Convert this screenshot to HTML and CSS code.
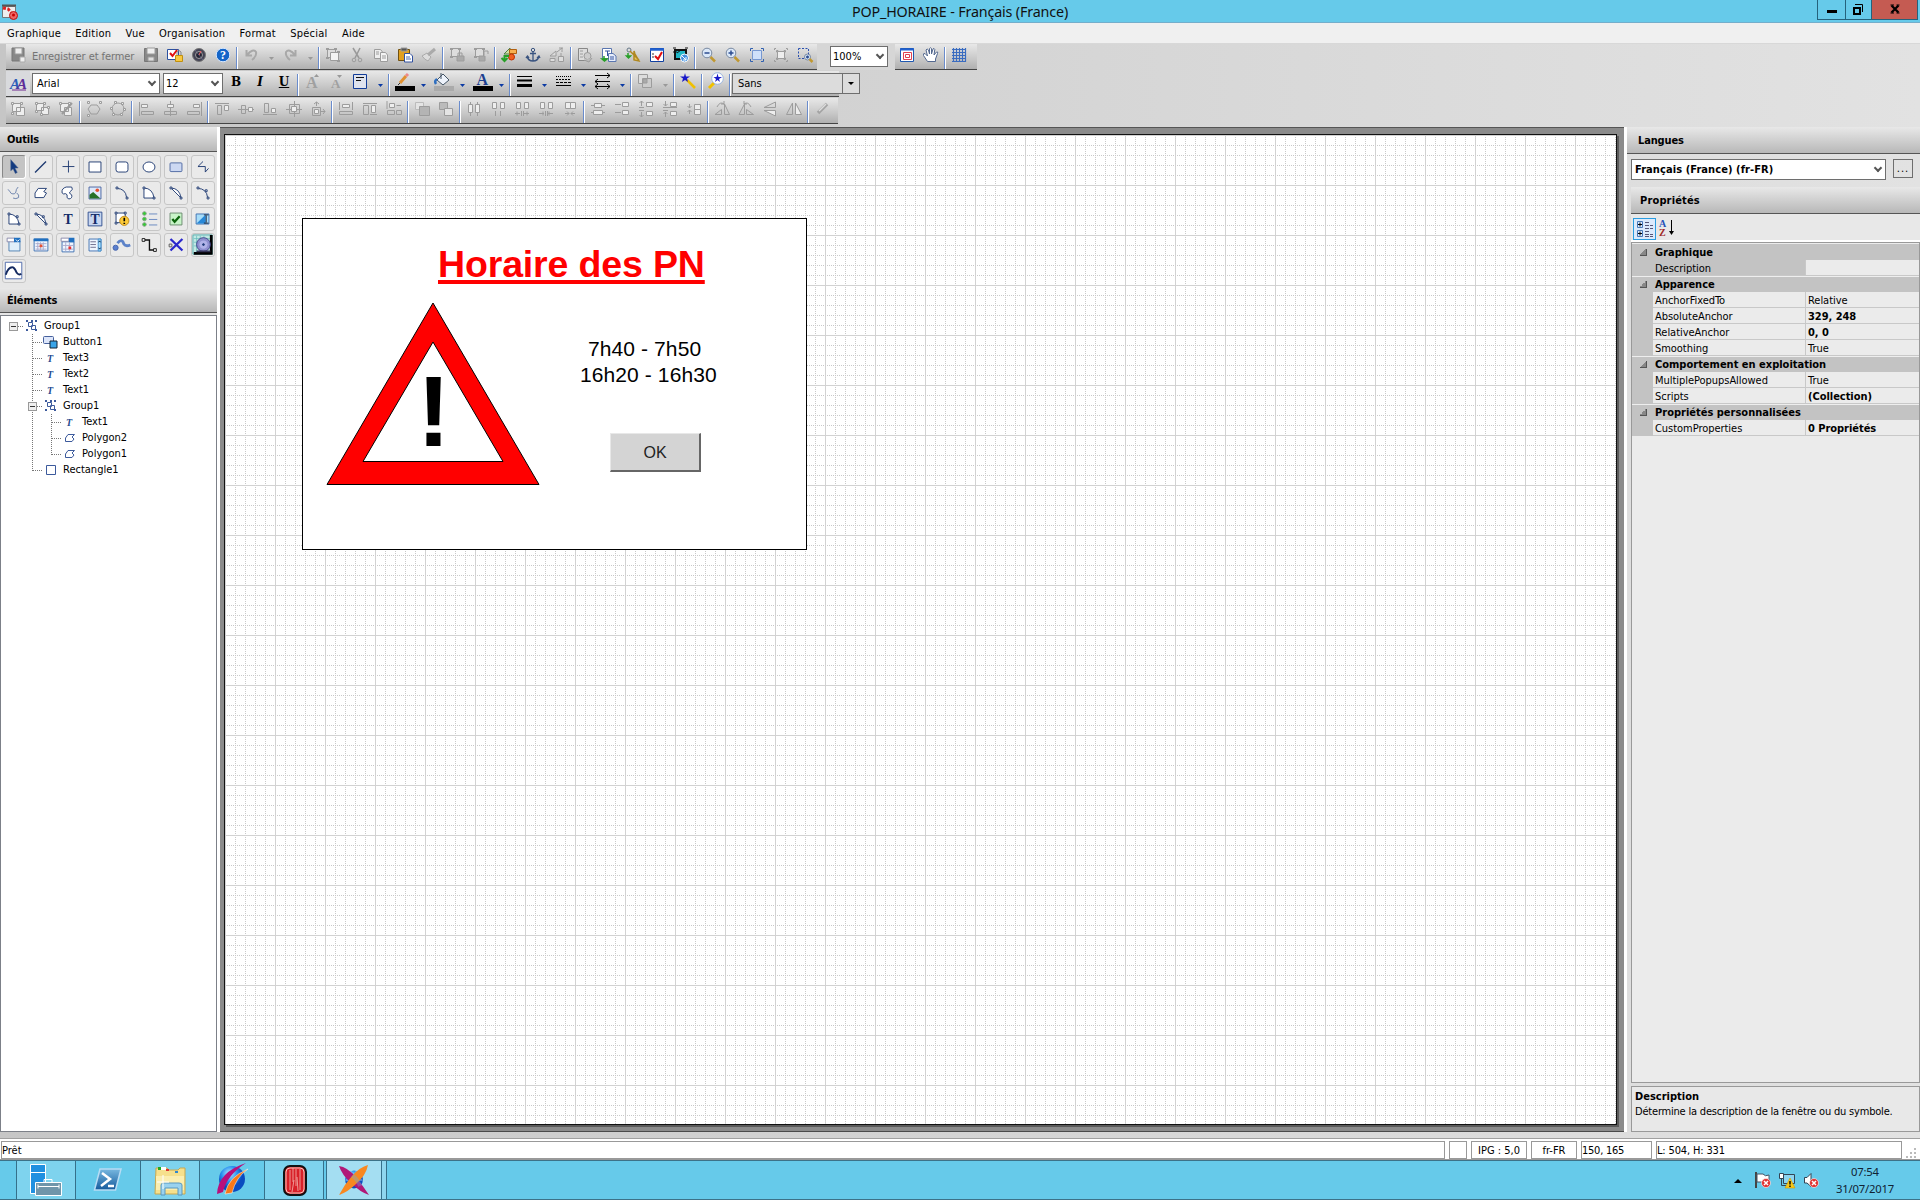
FILE: index.html
```html
<!DOCTYPE html>
<html lang="fr">
<head>
<meta charset="utf-8">
<title>POP_HORAIRE - Français (France)</title>
<link rel="stylesheet" href="styles.css">
</head>
<body>
<div class="window">
<header class="titlebar">
  <svg class="appicon" viewBox="0 0 18 16"><path d="M1.500 2.500H14.500V13.500H1.500Z" fill="#eee" stroke="#777"/><path d="M1 1.500H15" stroke="#555" stroke-width="2"/><path d="M2 4L7 5L10 8" stroke="#d22" stroke-width="3" stroke-dasharray="3 1.500" fill="none"/><circle cx="12.500" cy="11.500" r="4" fill="#e66" stroke="#b11"/><circle cx="12.500" cy="11" r="1.500" fill="#c00"/></svg>
  <h1>POP_HORAIRE - Français (France)</h1>
  <div class="winbtns">
    <span class="wb min"><svg viewBox="0 0 27 19"><path d="M9 11.500H19" stroke="#000" stroke-width="3"/></svg></span>
    <span class="wb max"><svg viewBox="0 0 25 19"><path d="M8 8H14V14H8Z" fill="none" stroke="#000" stroke-width="2"/><path d="M9 4.500H16.500V12" fill="none" stroke="#000"/></svg></span>
    <span class="wb close"><svg viewBox="0 0 45 19"><path d="M19.500 5.500L26.500 12.500M26.500 5.500L19.500 12.500" stroke="#000" stroke-width="2.200"/><path d="M18.500 5H22M24.500 5H27.500M18.500 13H22M24.500 13H27.500" stroke="#000"/></svg></span>
  </div>
</header>
<nav class="menu"><span>Graphique</span><span>Edition</span><span>Vue</span><span>Organisation</span><span>Format</span><span>Spécial</span><span>Aide</span></nav>

<div class="toolbars">
<div class="tb tb1">
  <svg class="i" viewBox="0 0 24 24"><path d="M6 5H18V18H6Z" fill="#888" stroke="#777"/><path d="M9 5H16V11H9Z" fill="#eee"/><path d="M14 14H19V19H14Z" fill="#eee" stroke="#aaa"/></svg>
  <span class="savelabel">Enregistrer et fermer</span>
  <svg class="i" viewBox="0 0 24 24"><path d="M5.500 5.500H18.500V18.500H5.500Z" fill="#888" stroke="#777"/><path d="M8 5H16V11H8Z" fill="#eee"/><path d="M9 14H15V18H9Z" fill="#ddd"/></svg>
  <svg class="i" viewBox="0 0 24 24"><path d="M4.500 6.500H15.500V16.500H4.500Z" fill="#fff" stroke="#2a50a0"/><path d="M7 10L9.500 13L14 7" stroke="#e01010" stroke-width="2"/><path d="M12.500 12.500H19.500V18.500H12.500Z" fill="#f8c840" stroke="#c09010"/><path d="M14 12V9Q16 6 18 9V12" stroke="#888"/></svg>
  <svg class="i" viewBox="0 0 24 24"><circle cx="12" cy="12" r="6.500" fill="#445" stroke="#777"/><circle cx="12" cy="12" r="3.500" fill="#223"/><path d="M12 12L14 8" stroke="#f66"/><path d="M8 7L16 17" stroke="#88a" opacity=".5"/></svg>
  <svg class="i" viewBox="0 0 24 24"><circle cx="12" cy="12" r="6.800" fill="#1565c8" stroke="#d8e8ff"/><text x="12" y="16" class="q">?</text></svg>
  <i class="sep"></i>
  <svg class="i sp" viewBox="0 0 39 24"><path d="M7.500 7V12.500H13M8 12Q14 5 17 9Q18 13 13 17" stroke="#a8a8a8" stroke-width="2"/><path d="M30 14H35L32.500 17Z" fill="#999" stroke="none"/></svg>
  <svg class="i sp" viewBox="0 0 39 24"><path d="M17.500 7V12.500H12M17 12Q11 5 8 9Q7 13 12 17" stroke="#a8a8a8" stroke-width="2"/><path d="M30 14H35L32.500 17Z" fill="#999" stroke="none"/></svg>
  <i class="sep"></i>
  <svg class="i" viewBox="0 0 24 24"><path d="M6.500 6.500H14.500V14.500H6.500Z" fill="#ddd"/><path d="M9.500 9.500H17.500V17.500H9.500Z" fill="#f4f4f4"/><path d="M5 6H8M13 6H16M5 15H8M16 18H19M16 9H19" stroke-width="2"/></svg>
  <svg class="i" viewBox="0 0 24 24"><path d="M8 5L14 15M15 5L10 15" stroke="#999" stroke-width="1.500"/><circle cx="9" cy="17" r="1.800"/><circle cx="15" cy="17" r="1.800"/></svg>
  <svg class="i" viewBox="0 0 24 24"><path d="M5.500 6.500H11.500L13.500 9V15.500H5.500Z" fill="#eee"/><path d="M11.500 9.500H16.500L18.500 12V18.500H11.500Z" fill="#f4f4f4"/><path d="M7 9H10M7 11H10M13 13H17M13 15H17"/></svg>
  <svg class="i" viewBox="0 0 24 24"><path d="M5.500 6.500H16.500V17.500H5.500Z" fill="#e0a020" stroke="#705010"/><path d="M8 5H14V8H8Z" fill="#555"/><path d="M11.500 10.500H17L19.500 13V19H11.500Z" fill="#fff" stroke="#3050a0"/><path d="M13 14H17M13 16H18" stroke="#5070b0"/></svg>
  <svg class="i" viewBox="0 0 24 24"><path d="M5 13L10 10L14 14L11 18Q8 17 5 13Z" fill="#ddd" stroke="#aaa"/><path d="M11 12L18 6" stroke="#aaa" stroke-width="3"/></svg>
  <i class="sep"></i>
  <svg class="i" viewBox="0 0 24 24"><path d="M6.500 5.500H14.500V13.500H6.500Z" fill="#ddd"/><path d="M5 6H8M13 6H16M5 14H8" stroke-width="2"/><path d="M12 13H19V18H12Z" fill="#aaa"/><path d="M13 13V10H17V13"/></svg>
  <svg class="i" viewBox="0 0 24 24"><path d="M6.500 5.500H14.500V13.500H6.500Z" fill="#ddd"/><path d="M5 6H8M13 6H16M5 14H8" stroke-width="2"/><path d="M10 13H16V18H10Z" fill="#aaa"/><path d="M15 12V8H19V11"/></svg>
  <i class="sep"></i>
  <svg class="i" viewBox="0 0 24 24"><path d="M7 11L13 5V11Z" fill="#d0e0a0" stroke="#50804a"/><path d="M12.500 6.500H19.500V10.500H12.500Z" fill="#f8b050" stroke="#b06010"/><circle cx="14.500" cy="14" r="3" fill="#f06020" stroke="#c03000"/><path d="M12 13H7.500V17M4.500 15L7.500 18L10.500 15" stroke="#28a028" stroke-width="2"/></svg>
  <svg class="i" viewBox="0 0 24 24"><circle cx="12" cy="7" r="1.700" stroke="#3a5480"/><path d="M12 9V18M9 10.500H15M6 13Q7 18 12 18Q17 18 18 13M5 15L6.500 13L8 15M16 15L18 13L19 15" stroke="#3a5480" stroke-width="1.300"/></svg>
  <svg class="i" viewBox="0 0 24 24"><path d="M5 13L11 8V13ZM5 15.500H10V18.500H5ZM13.500 13.500H18.500V18.500H13.500Z" fill="#ddd"/><path d="M12 9L17 5M17 5V9M14 5H18M16 10V13"/></svg>
  <i class="sep"></i>
  <svg class="i" viewBox="0 0 24 24"><path d="M5.500 5.500H14.500V17.500H5.500Z" fill="#ddd" stroke="#888"/><path d="M7 8H10M7 11H10M7 14H10"/><circle cx="14.500" cy="13" r="3.500" fill="#ccc"/><path d="M11 17L16 19L19 15" fill="#bbb"/></svg>
  <svg class="i" viewBox="0 0 24 24"><path d="M5.500 5.500H14.500V15.500H5.500Z" fill="#fff" stroke="#5a76b0"/><path d="M8 8H13M10.500 8V13" stroke="#3454a0"/><path d="M11.500 10.500H16L19 13V18.500H11.500Z" fill="#e8eefc" stroke="#5a76b0"/><path d="M13 14H17M13 16H17" stroke="#3454a0"/><path d="M7 13V17M5 16L7.500 18L10 16Z" fill="#2a2" stroke="#28a028" stroke-width="1.500"/></svg>
  <svg class="i" viewBox="0 0 24 24"><circle cx="8" cy="7" r="2" stroke="#678"/><path d="M9 8L18 17M13 8V17L18 18L14 11Z" fill="#e8c860" stroke="#b08820" stroke-width="1.500"/><path d="M7 10V14M5.500 13L7.500 15L9.500 13Z" fill="#2a2" stroke="#28a028" stroke-width="1.500"/></svg>
  <svg class="i" viewBox="0 0 24 24"><path d="M5.500 5.500H18.500V18.500H5.500Z" fill="#fff" stroke="#1040a0"/><path d="M5 6.500H19" stroke="#2060d0" stroke-width="2.500"/><path d="M7 11H9M7 14H9" stroke="#333"/><path d="M10 13L13 16L17 9" stroke="#e01010" stroke-width="2"/></svg>
  <svg class="i" viewBox="0 0 24 24"><path d="M6 7H17V16H6Z" fill="#20b8c8" stroke="#111" stroke-width="2"/><path d="M4 5H7M16 5H19M4 9H8M8 10L12 7" stroke="#111"/><circle cx="15.500" cy="15" r="4" fill="#4090e0" stroke="#fff"/><path d="M13 13L17 17M17 14V17H14" stroke="#fff"/></svg>
  <i class="sep"></i>
  <svg class="i mag" viewBox="0 0 24 24"><circle cx="10" cy="10" r="4.800"/><path d="M7.500 10H12.500" class="k"/><path d="M13.500 14L18 18.500" class="h"/></svg>
  <svg class="i mag" viewBox="0 0 24 24"><circle cx="10" cy="10" r="4.800"/><path d="M7.500 10H12.500M10 7.500V12.500" class="k"/><path d="M13.500 14L18 18.500" class="h"/></svg>
  <svg class="i" viewBox="0 0 24 24"><path d="M7.500 7.500H16.500V16.500H7.500Z" fill="#cfe0fa" stroke="#7898d0"/><path d="M5.500 8V5.500H8M16 5.500H18.500V8M18.500 16V18.500H16M8 18.500H5.500V16" stroke="#3060b0"/></svg>
  <svg class="i" viewBox="0 0 24 24"><path d="M8.500 8.500H15.500V15.500H8.500Z" fill="#eee"/><path d="M7.500 7.500H9V9H7.500ZM15 7.500H16.500V9H15ZM7.500 15H9V16.500H7.500ZM15 15H16.500V16.500H15ZM5.500 7V5.500H7M17 5.500H18.500V7M5.500 17V18.500H7M18.500 17V18.500H17" /></svg>
  <svg class="i mag" viewBox="0 0 24 24"><path d="M5.500 5.500H15.500V15.500H5.500Z" stroke="#2a50b0" stroke-dasharray="2 1.500"/><circle cx="14.500" cy="14" r="3"/><path d="M13 14H16M14.500 12.500V15.500" class="k"/><path d="M16.500 16L19.500 19" class="h"/></svg>
  <span class="zoomwrap"><span class="combo zoom">100%<b class="chev"></b></span></span>
  <svg class="i" viewBox="0 0 24 24"><path d="M5.500 5.500H18.500V18.500H5.500Z" fill="#fff" stroke="#1f58b0"/><path d="M5 6.500H19" stroke="#2060d0" stroke-width="2"/><path d="M8.500 9.500H16.500V16.500H8.500Z" stroke="#e04050"/><path d="M10.500 11.500H14.500V14.500H10.500Z" stroke="#e04050"/></svg>
  <svg class="i" viewBox="0 0 24 24"><path d="M8.500 18.500L4.500 12.500Q4 10 6 10.500L8.500 13L7 7Q8 5 9.500 7L10.500 11V5.500Q11.500 4 12.500 5.500V11L14 6Q15 4.500 15.800 6.500L15 12L17.500 9Q19.500 8.500 18.500 10.500L16.500 16V18.500Z" fill="#fff" stroke="#53688f"/></svg>
  <i class="sep"></i>
  <svg class="i" viewBox="0 0 24 24"><path d="M6.500 5V19M9.500 5V19M12.500 5V19M15.500 5V19M18.500 5V19M5 6.500H19M5 9.500H19M5 12.500H19M5 15.500H19M5 18.500H19" stroke="#3a6cc0" stroke-width="1.200"/></svg>
</div>

<div class="tb tb2">
  <svg class="i aa" viewBox="0 0 24 24"><text x="4" y="17" class="a1" textLength="17">A<tspan class="a2">A</tspan></text><path d="M6 18.500H20" stroke="#702890"/></svg>
  <span class="combo font">Arial<b class="chev"></b></span>
  <span class="combo size">12<b class="chev"></b></span>
  <span class="fmt">B</span><span class="fmt it">I</span><span class="fmt un">U</span>
  <i class="sep"></i>
  <svg class="i" viewBox="0 0 24 24"><text x="6" y="18" class="ga">A</text><path d="M14 7L16.500 4L19 7Z" fill="#999" stroke="none"/></svg>
  <svg class="i" viewBox="0 0 24 24"><text x="7" y="18" class="gb">A</text><path d="M13 5H18L15.500 8Z" fill="#999" stroke="none"/></svg>
  <svg class="i sp" viewBox="0 0 39 24"><path d="M5.500 4.500H18.500V18.500H5.500Z" stroke="#123c98" fill="#dfe3ee"/><path d="M8 7.500H16M8 10.500H13" stroke="#111"/><path class="c" d="M30 14H35L32.500 17Z"/></svg>
  <i class="sep"></i>
  <svg class="i sp" viewBox="0 0 39 24"><path d="M9 13L15 6" stroke="#e09030" stroke-width="3"/><path d="M15 6L17 4" stroke="#e88" stroke-width="3"/><path d="M7 15L9 13" stroke="#333"/><path d="M4 16H24V21H4Z" fill="#000" stroke="none"/><path class="c" d="M30 14H35L32.500 17Z"/></svg>
  <svg class="i sp" viewBox="0 0 39 24"><path d="M7 10L13 4L19 10L13 15Z" fill="#eef3fb" stroke="#456"/><path d="M11 9V3" stroke="#456"/><path d="M7 9Q4 11 6 14" stroke="#2f6fc0" stroke-width="2.500"/><path d="M4 16H24V21H4Z" fill="#aaa" stroke="none"/><path class="c" d="M30 14H35L32.500 17Z"/></svg>
  <svg class="i sp" viewBox="0 0 39 24"><text x="7.500" y="15" class="na">A</text><path d="M4 16H24V21H4Z" fill="#000" stroke="none"/><path class="c" d="M30 14H35L32.500 17Z"/></svg>
  <i class="sep"></i>
  <svg class="i sp" viewBox="0 0 39 24"><path d="M5 6.500H20" stroke="#000" stroke-width="1"/><path d="M5 10.500H20" stroke="#000" stroke-width="2"/><path d="M5 15.500H20" stroke="#000" stroke-width="3"/><path class="c" d="M30 14H35L32.500 17Z"/></svg>
  <svg class="i sp" viewBox="0 0 39 24"><path d="M5 6.500H20" stroke="#000" stroke-dasharray="1 1"/><path d="M5 9.500H20" stroke="#000" stroke-dasharray="2 1"/><path d="M5 12.500H20" stroke="#000" stroke-dasharray="3 1"/><path d="M5 15.500H20" stroke="#000"/><path class="c" d="M30 14H35L32.500 17Z"/></svg>
  <svg class="i sp" viewBox="0 0 39 24"><path d="M5 5.500H20M17 3L20 5.500L17 8M5 11.500H20M8 9L5 11.500L8 14M5 16.500H20M17 14L20 16.500L17 19M8 14L5 16.500L8 19" stroke="#000"/><path class="c" d="M30 14H35L32.500 17Z"/></svg>
  <i class="sep"></i>
  <svg class="i sp" viewBox="0 0 39 24"><path d="M5.500 4.500H14.500V13.500H5.500Z" fill="#ddd"/><path d="M9.500 8.500H18.500V17.500H9.500Z" fill="#ccc"/><path d="M10 9H14V13H10Z" fill="#aaa"/><path d="M30 14H35L32.500 17Z" fill="#999" stroke="none"/></svg>
  <i class="sep"></i>
  <svg class="i" viewBox="0 0 24 24"><path d="M11 10L19 18" stroke="#f0c000" stroke-width="2.500"/><path class="star" d="M9 3L10 6.500H14L11 8.500L12 12L9 10L6 12L7 8.500L4 6.500H8Z"/></svg>
  <i class="sep"></i>
  <svg class="i" viewBox="0 0 24 24"><path d="M10 13L5 18" stroke="#f0c000" stroke-width="3"/><circle cx="13.500" cy="8.500" r="5.800" fill="#fff" stroke="#9ab6e0"/><path class="star" d="M13.500 3.500L14.500 7H18L15 9L16 12L13.500 10L11 12L12 9L9.500 7H12.500Z"/></svg>
  <i class="sep"></i>
  <span class="combo sans">Sans<b class="drop"></b></span>
</div>

<div class="tb tb3">
  <svg class="i w" viewBox="0 0 24 24"><path d="M6.500 6.500H14.500V14.500H6.500ZM10.500 10.500H18.500V18.500H10.500Z"/><path d="M5.500 5.500h2v2h-2zM14.500 5.500h2v2h-2zM5.500 15.500h2v2h-2z"/></svg>
  <svg class="i w" viewBox="0 0 24 24"><path d="M6.500 6.500H13.500V13.500H6.500ZM11.500 10.500H18.500V17.500H11.500Z"/><path d="M5.500 5.500h2v2h-2zM13.500 5.500h2v2h-2zM5.500 13.500h2v2h-2zM17.500 9.500h2v2h-2zM10.500 16.500h2v2h-2z"/></svg>
  <svg class="i w" viewBox="0 0 24 24"><path d="M6.500 6.500H14.500V14.500H6.500ZM10.500 10.500H17.500V18.500H10.500Z"/><path d="M5.500 5.500h2v2h-2zM14.500 5.500h2v2h-2z"/><path d="M8 17L18 6" stroke-width="2"/></svg>
  <i class="sep"></i>
  <svg class="i" viewBox="0 0 24 24"><path d="M9 8L15 8L18 12L15 17H9L6 12Z"/><path class="wf" d="M5.500 4.500h2v2h-2zM17.500 4.500h2v2h-2zM5.500 17.500h2v2h-2z"/></svg>
  <svg class="i" viewBox="0 0 24 24"><circle cx="12" cy="12" r="6"/><path class="wf" d="M8.500 4.500h2v2h-2zM15.500 5.500h2v2h-2zM4.500 10.500h2v2h-2zM17.500 11.500h2v2h-2zM6.500 16.500h2v2h-2zM14.500 16.500h2v2h-2z"/></svg>
  <i class="sep"></i>
  <svg class="i" viewBox="0 0 24 24"><path d="M5.500 5V19M7.500 14.500H19.500V17.500H7.500Z"/><path class="wf" d="M7.500 7.500H13.500V10.500H7.500Z"/></svg>
  <svg class="i" viewBox="0 0 24 24"><path d="M12.500 4V19M6.500 14.500H18.500V17.500H6.500Z"/><path class="wf" d="M9.500 7.500H15.500V10.500H9.500Z"/></svg>
  <svg class="i" viewBox="0 0 24 24"><path d="M19.500 5V19M5.500 14.500H17.500V17.500H5.500Z"/><path class="wf" d="M11.500 7.500H17.500V10.500H11.500Z"/></svg>
  <i class="sep"></i>
  <svg class="i" viewBox="0 0 24 24"><path d="M5 6.500H19M7.500 8.500H11.500V17.500H7.500Z"/><path class="wf" d="M14.500 8.500H18.500V13.500H14.500Z"/></svg>
  <svg class="i" viewBox="0 0 24 24"><path d="M4 12.500H20M7.500 8.500H11.500V16.500H7.500Z"/><path class="wf" d="M14.500 10.500H18.500V14.500H14.500Z"/></svg>
  <svg class="i" viewBox="0 0 24 24"><path d="M5 17.500H19M6.500 6.500H10.500V15.500H6.500Z"/><path class="wf" d="M13.500 11.500H17.500V15.500H13.500Z"/></svg>
  <svg class="i" viewBox="0 0 24 24"><path d="M12.500 4V20M4 12.500H20M7.500 7.500H17.500V16.500H7.500Z"/><path class="wf" d="M9.500 9.500H14.500V14.500H9.500Z"/></svg>
  <svg class="i" viewBox="0 0 24 24"><path d="M6.500 10.500H14.500V18.500H6.500ZM10.500 9V5M8 7L10.500 5L13 7M14 14.500H19M17 12L19 14.500L17 17"/><path class="wf" d="M8.500 12.500H12.500V16.500H8.500Z"/></svg>
  <i class="sep"></i>
  <svg class="i" viewBox="0 0 24 24"><path d="M5.500 5V13M18.500 5V13M5.500 14.500H18.500V17.500H5.500Z"/><path class="wf" d="M8.500 7.500H15.500V10.500H8.500Z"/></svg>
  <svg class="i" viewBox="0 0 24 24"><path d="M5.500 8.500H10.500V17.500H5.500ZM5 6.500H19M12 17.500H19"/><path class="wf" d="M13.500 8.500H17.500V15.500H13.500Z"/></svg>
  <svg class="i" viewBox="0 0 24 24"><path d="M5 4V12M5.500 13.500H12.500V17.500H5.500ZM14.500 8.500H19M14.500 13.500H19.500V17.500H14.500Z"/><path class="wf" d="M7.500 6.500H12.500V10.500H7.500Z"/></svg>
  <i class="sep"></i>
  <svg class="i" viewBox="0 0 24 24"><path d="M5.500 5.500H13.500V12.500H5.500Z" fill="#e4e4e4" stroke="#bbb"/><path d="M9.500 9.500H19.500V18.500H9.500Z" fill="#b4b4b4"/></svg>
  <svg class="i" viewBox="0 0 24 24"><path d="M5.500 5.500H13.500V12.500H5.500Z" fill="#bbb"/><path d="M10.500 11.500H18.500V18.500H10.500Z" fill="#e4e4e4"/></svg>
  <i class="sep"></i>
  <svg class="i" viewBox="0 0 24 24"><path d="M8.500 5V19M15.500 5V19"/><path class="wf" d="M6.500 7.500H10.500V15.500H6.500ZM13.500 7.500H17.500V15.500H13.500Z"/></svg>
  <svg class="i" viewBox="0 0 24 24"><path d="M9.500 14V19M14.500 14V19"/><path class="wf" d="M6.500 5.500H10.500V11.500H6.500ZM14.500 5.500H18.500V11.500H14.500Z"/></svg>
  <svg class="i" viewBox="0 0 24 24"><path d="M5 16.500H10M14 16.500H19M7 14.500V18.500M17 14.500V18.500M11.500 14V19M13.500 14V19"/><path class="wf" d="M6.500 5.500H10.500V11.500H6.500ZM14.500 5.500H18.500V11.500H14.500Z"/></svg>
  <svg class="i" viewBox="0 0 24 24"><path d="M5 16.500H10M14 16.500H19M9 14.500V18.500M15 14.500V18.500M11.500 14V19M13.500 14V19"/><path class="wf" d="M6.500 5.500H10.500V11.500H6.500ZM14.500 5.500H18.500V11.500H14.500Z"/></svg>
  <svg class="i" viewBox="0 0 24 24"><path d="M7 16.500H11M13 16.500H17M9 14.500L11 16.500L9 18.500M15 14.500L13 16.500L15 18.500"/><path class="wf" d="M7.500 5.500H12.500V11.500H7.500ZM12.500 5.500H17.500V11.500H12.500Z"/></svg>
  <i class="sep"></i>
  <svg class="i" viewBox="0 0 24 24"><path d="M5 8.500H19M5 15.500H19"/><path class="wf" d="M8.500 6.500H15.500V10.500H8.500ZM7.500 13.500H16.500V17.500H7.500Z"/></svg>
  <svg class="i" viewBox="0 0 24 24"><path d="M5 7.500H11M5 15.500H11"/><path class="wf" d="M12.500 5.500H18.500V9.500H12.500ZM12.500 13.500H18.500V17.500H12.500Z"/></svg>
  <svg class="i" viewBox="0 0 24 24"><path d="M7.500 4V9M5.500 6L7.500 4L9.500 6M5 10.500H10M5 13.500H10M7.500 15V20M5.500 18L7.500 20L9.500 18"/><path class="wf" d="M12.500 5.500H18.500V9.500H12.500ZM12.500 14.500H18.500V18.500H12.500Z"/></svg>
  <svg class="i" viewBox="0 0 24 24"><path d="M7.500 4V9M5.500 7L7.500 9L9.500 7M5 10.500H19M5 13.500H10M7.500 15V20M5.500 17L7.500 15L9.500 17"/><path class="wf" d="M12.500 5.500H18.500V9.500H12.500ZM12.500 14.500H18.500V18.500H12.500Z"/></svg>
  <svg class="i" viewBox="0 0 24 24"><path d="M7.500 7V11M5.500 9L7.500 11L9.500 9M7.500 13V17M5.500 15L7.500 13L9.500 15"/><path class="wf" d="M12.500 7.500H18.500V12.500H12.500ZM12.500 12.500H18.500V17.500H12.500Z"/></svg>
  <i class="sep"></i>
  <svg class="i" viewBox="0 0 24 24"><path d="M5 17.500H11.500L11.500 12.500ZM14.500 17.500H19.500L14.500 7ZM7 10Q10 4 14 7M14 4V7H11"/></svg>
  <svg class="i" viewBox="0 0 24 24"><path d="M5 17.500H10.500V7ZM12.500 17.500H19.500L12.500 12.500ZM17 10Q14 4 10 7M10 4V7H13"/></svg>
  <svg class="i" viewBox="0 0 24 24"><path d="M6 10.500H17.500V5Z"/><path class="wf" d="M6 13.500H17.500V19Z"/></svg>
  <svg class="i" viewBox="0 0 24 24"><path d="M4.500 17.500H10.500V6Z"/><path class="wf" d="M13.500 17.500H19.500L13.500 6Z"/></svg>
  <i class="sep"></i>
  <svg class="i" viewBox="0 0 24 24"><path d="M8 16L17 7" stroke="#a4a4a4" stroke-width="3.500"/><path d="M9 14L16 7" stroke="#ddd" stroke-width="1.500"/></svg>
</div>
</div>

<main class="work">
<aside class="left">
  <h2 class="hd outils">Outils</h2>
  <div class="tools">
    <svg class="on" viewBox="0 0 24 24"><path d="M8.500 4V16L11 14L13.500 19L15.500 18L13 13H16.500Z" fill="#123a80" stroke="#46608c" stroke-width=".6"/></svg>
    <svg viewBox="0 0 24 24"><path d="M5.500 18L17.500 6" stroke-width="1.500"/></svg>
    <svg viewBox="0 0 24 24"><path d="M12.500 5V18M6 11.500H19"/></svg>
    <svg viewBox="0 0 24 24"><path class="f" d="M5.500 6.500H18.500V17.500H5.500Z"/></svg>
    <svg viewBox="0 0 24 24"><rect class="f" x="5.500" y="6.500" width="13" height="11" rx="2.500"/></svg>
    <svg viewBox="0 0 24 24"><ellipse class="f" cx="12" cy="12" rx="6.500" ry="5.500"/></svg>
    <svg viewBox="0 0 24 24"><rect x="5.500" y="7.500" width="13" height="9.500" rx="1" fill="#ccd8f2" stroke="#4a66a0"/></svg>
    <svg viewBox="0 0 24 24"><path d="M12 6L6.500 11.500H14.500V17.500L18 13.500"/></svg>
    <svg viewBox="0 0 24 24"><path stroke="#667da8" d="M5.500 8Q8 11 9 12.500Q13 14 14 11Q14 8 16.500 5.500M15 12Q18 14 17 17Q14 19 11 17.500"/></svg>
    <svg viewBox="0 0 24 24"><path class="f" d="M5.500 17V12L9 7H18L15 10.500L18 12L15 17Z"/></svg>
    <svg viewBox="0 0 24 24"><path class="f" d="M5.500 11Q5 7 10 5.500H16Q18 8 15 10Q12 12 16 14Q17 18 13 18.500Q10 18 11 14Q10 12 7 13Q5 12 5.500 11Z"/></svg>
    <svg viewBox="0 0 24 24"><path fill="#dfe8fa" stroke="#4460a0" d="M5.500 5.500H18.500V18.500H5.500Z"/><circle cx="14.500" cy="9" r="2" fill="#e65030" stroke="none"/><path d="M6 18V14L10 11L18 18Z" fill="#277027" stroke="none"/></svg>
    <svg viewBox="0 0 24 24"><path d="M6 7Q16 7 17 17"/><path class="f s" d="M5.500 5.500h2v2h-2zM16.500 16.500h2v2h-2z"/></svg>
    <svg viewBox="0 0 24 24"><path class="f" d="M6.500 6.500Q16 7 17.500 17.500H6.500Z"/><path class="f s" d="M5.500 5.500h2v2h-2zM16.500 16.500h2v2h-2z"/></svg>
    <svg viewBox="0 0 24 24"><path class="f" d="M6.500 6.500Q16 7 17.500 17.500Z"/><path class="f s" d="M5.500 5.500h2v2h-2zM16.500 16.500h2v2h-2z"/></svg>
    <svg viewBox="0 0 24 24"><path d="M6 7Q16 7 17 17"/><path class="f s" d="M5.500 5.500h2v2h-2zM16.500 16.500h2v2h-2zM14.500 8.500h2v2h-2z"/></svg>
    <svg viewBox="0 0 24 24"><path class="f" d="M6.500 6.500Q16 7 17.500 17.500H6.500Z"/><path class="f s" d="M5.500 5.500h2v2h-2zM16.500 16.500h2v2h-2zM14.500 8.500h2v2h-2z"/></svg>
    <svg viewBox="0 0 24 24"><path class="f" d="M6.500 6.500Q16 7 17.500 17.500Z"/><path class="f s" d="M5.500 5.500h2v2h-2zM16.500 16.500h2v2h-2zM13.500 8.500h2v2h-2z"/></svg>
    <svg viewBox="0 0 24 24"><text class="t" x="12" y="17">T</text></svg>
    <svg viewBox="0 0 24 24"><path d="M4.500 4.500H19.500V19.500H4.500Z" fill="#c8d6f0" stroke="#2d4c8c"/><text class="t" x="12" y="17.500">T</text></svg>
    <svg viewBox="0 0 24 24"><path class="f" d="M5.500 5.500H15.500V16H5.500Z"/><path class="f s" d="M4.500 4.500h2v2h-2zM14.500 4.500h2v2h-2zM4.500 15.500h2v2h-2z"/><circle cx="14.500" cy="14" r="5" fill="#fcca38" stroke="#c08818"/><path d="M14.500 10.500V14.500M14.500 16V17.500" stroke="#000" stroke-width="1.800"/></svg>
    <svg viewBox="0 0 24 24"><g fill="#3c3" stroke="#88a088"><circle cx="7" cy="6" r="2"/><circle cx="7" cy="12" r="2"/><circle cx="7" cy="18" r="2"/></g><path d="M12 6.500H21M12 12.500H21M12 18.500H21" stroke="#6484c0"/></svg>
    <svg viewBox="0 0 24 24"><path d="M5.500 5.500H18.500V18.500H5.500Z" fill="#c8f4c8" stroke="#68886c"/><path d="M8 12L10.500 15L16 9" stroke="#0c640c" stroke-width="2.500"/></svg>
    <svg viewBox="0 0 24 24"><path d="M4.500 6.500H18.500V17.500H4.500Z" fill="#a8ddf8" stroke="#3c70b0"/><path d="M5 17L15 7V17Z" fill="#2888d8" stroke="none"/><path d="M13 7.500H18M13 16.500H18M15.500 8V16" stroke="#223"/></svg>
    <svg viewBox="0 0 24 24"><path d="M6.500 7.500H18.500V18.500H6.500Z" fill="#e0effa" stroke="#5080b0"/><path d="M4.500 4.500H12.500V8.500H4.500Z" fill="#fff" stroke="#88a"/><path d="M12 4H19V9H12Z" fill="#2070c0" stroke="none"/><path d="M14 6L16 8L18 6" stroke="#fff"/></svg>
    <svg viewBox="0 0 24 24"><path d="M4.500 5.500H19.500V18.500H4.500Z" fill="#f0f6ff" stroke="#3c70b0"/><path d="M4 6.500H20" stroke="#2070c0" stroke-width="3"/><path d="M6 10.500H18M6 13.500H18M6 16.500H18M8.500 9V18M11.500 9V18M14.500 9V18" stroke="#aac"/><path d="M10.500 11.500H13.500V14.500H10.500Z" fill="#e85030" stroke="none"/></svg>
    <svg viewBox="0 0 24 24"><path d="M5.500 8.500H18.500V19.500H5.500Z" fill="#f0f6ff" stroke="#3c70b0"/><path d="M4.500 4.500H13V8H4.500Z" fill="#fff" stroke="#88a"/><path d="M13 4H19V9H13Z" fill="#2070c0" stroke="none"/><path d="M6 12.500H18M6 16.500H18M9.500 9V19M13.500 9V19" stroke="#aac"/><path d="M12.500 13.500H15.500V16.500H12.500Z" fill="#e83030" stroke="none"/></svg>
    <svg viewBox="0 0 24 24"><path d="M5.500 5.500H18.500V18.500H5.500Z" fill="#f0f6ff" stroke="#3c70b0"/><path d="M15.500 5.500H18.500V18.500H15.500Z" fill="#a8dcf8" stroke="#4090d0"/><path d="M7 8.500H13M7 11.500H13M7 14.500H13" stroke="#668"/><path d="M16 9L17 7.500L18 9M16 15L17 16.500L18 15" stroke="#124"/></svg>
    <svg viewBox="0 0 24 24"><circle cx="5" cy="15" r="2.800" fill="#5a7fd0" stroke="#4664a8"/><path d="M7 10Q12 4 14 11Q16 14 21 12" stroke="#5c82c8" stroke-width="3"/></svg>
    <svg viewBox="0 0 24 24"><path d="M6 6.500H12.500V17.500H18" stroke="#111" stroke-width="1.500"/><path d="M4.500 5h3v3h-3zM17 16h3v3h-3z" fill="#fff" stroke="#111"/></svg>
    <svg viewBox="0 0 24 24"><path d="M6 5.500L19 18M19 5.500L6 18" stroke="#2a28cc" stroke-width="2.500"/><path d="M4.500 11h3v3h-3z" stroke="#555"/></svg>
    <svg viewBox="0 0 24 24"><path d="M1 1H22V22H1Z" fill="#c2e8e4" stroke="#4aa8a8"/><path d="M2 5H20M2 9H20M2 13H20M5 2V20M9 2V20M13 2V20" stroke="#5bb8b8" stroke-width=".7"/><path d="M21 1V21H2" stroke="#000" stroke-width="3"/><circle cx="12.500" cy="11.500" r="7.500" fill="#8f90d0" stroke="#404488"/><circle cx="12.500" cy="11.500" r="4.500" fill="#b0b2e8" stroke="none"/><circle cx="12.500" cy="11.500" r="1" fill="#23408a"/><path d="M5 19H20" stroke="#335" stroke-width="2"/></svg>
    <svg viewBox="0 0 24 24"><path d="M2.500 2.500H20.500V20.500H2.500Z" fill="#fff" stroke="#4a66a8"/><path d="M3 16Q6 7 11 8Q13 9 15 14Q17 17 20 15" stroke="#142a60" stroke-width="2"/></svg>
  </div>
  <h2 class="hd">Éléments</h2>
  <div class="tree">
    <i class="dots v1"></i><i class="dots v2"></i>
    <div class="row l0"><b class="ex"></b><svg viewBox="0 0 12 12"><path d="M2.500 2.500H6.500V6.500H2.500ZM5.500 5.500H9.500V9.500H5.500Z"/><path class="d" d="M0 0h2v2h-2zM9 0h2v2h-2zM0 9h2v2h-2zM9 9h2v2h-2zM5 0h2v2h-2z"/></svg>Group1</div>
    <div class="row l1"><svg viewBox="0 0 12 12" class="btn"><rect x="-1.500" y=".5" width="10" height="7" rx="1" fill="#dde6fa" stroke="#46609c"/><path d="M5 5H12V12H5Z" fill="#38a4e8" stroke="#123"/></svg>Button1</div>
    <div class="row l1"><svg viewBox="0 0 12 12"><text x="2" y="10" class="tt">T</text></svg>Text3</div>
    <div class="row l1"><svg viewBox="0 0 12 12"><text x="2" y="10" class="tt">T</text></svg>Text2</div>
    <div class="row l1"><svg viewBox="0 0 12 12"><text x="2" y="10" class="tt">T</text></svg>Text1</div>
    <div class="row l1"><b class="ex"></b><svg viewBox="0 0 12 12"><path d="M2.500 2.500H6.500V6.500H2.500ZM5.500 5.500H9.500V9.500H5.500Z"/><path class="d" d="M0 0h2v2h-2zM9 0h2v2h-2zM0 9h2v2h-2zM9 9h2v2h-2zM5 0h2v2h-2z"/></svg>Group1</div>
    <div class="row l2"><svg viewBox="0 0 12 12"><text x="2" y="10" class="tt">T</text></svg>Text1</div>
    <div class="row l2"><svg viewBox="0 0 12 12"><path d="M1.500 9.500V6L4 2.500H10.500L8 5L10 7L8 9.500Z" fill="#fff"/></svg>Polygon2</div>
    <div class="row l2"><svg viewBox="0 0 12 12"><path d="M1.500 9.500V6L4 2.500H10.500L8 5L10 7L8 9.500Z" fill="#fff"/></svg>Polygon1</div>
    <div class="row l1"><svg viewBox="0 0 12 12"><path d="M1.500 1.500H10.500V10.500H1.500Z" fill="#fff"/></svg>Rectangle1</div>
  </div>
</aside>

<section class="frame"><div class="page">
  <svg class="grid" width="1391" height="989">
    <defs><pattern id="g" width="50" height="50" patternUnits="userSpaceOnUse">
      <path d="M10.500 0V50M20.500 0V50M30.500 0V50M40.500 0V50M0 10.500H50M0 20.500H50M0 30.500H50M0 40.500H50" stroke="#c9c9c9" stroke-dasharray="1 1"/>
      <path d="M.5 0V50M0 .5H50" stroke="#d2d2d2"/></pattern></defs>
    <rect width="1391" height="989" fill="url(#g)"/>
  </svg>
  <div class="popup">
    <svg class="sign" viewBox="0 0 214 184"><path d="M107 1L213 182.500H1Z" fill="red" stroke="#000"/><path d="M107 40L177 159.500H37Z" fill="#fff" stroke="#000"/></svg>
    <div class="bang">!</div>
    <div class="ptitle">Horaire des PN</div>
    <div class="t1">7h40 - 7h50</div>
    <div class="t2">16h20 - 16h30</div>
    <div class="ok">OK</div>
  </div>
</div></section>

<aside class="right">
  <h2 class="hd lang">Langues</h2>
  <div class="langrow"><span class="combo lg">Français (France) (fr-FR)<b class="chev"></b></span><span class="more">...</span></div>
  <h2 class="hd props">Propriétés</h2>
  <div class="ptools">
    <svg class="cat" viewBox="0 0 21 20"><path d="M3.500 2.500H8.500V8.500H3.500ZM3.500 11.500H8.500V17.500H3.500Z" fill="#d8eaff" stroke="#4878b8"/><path d="M4 5.500H8M6 3.500V7.500M4 14.500H8M6 12.500V16.500" stroke="#000"/><path d="M11 3.500H15M11 6.500H19M11 9.500H19M11 12.500H15M11 15.500H19M11 17.500H19" stroke="#557" stroke-dasharray="4 1"/></svg>
    <svg class="az" viewBox="0 0 18 20"><text x="1" y="9" fill="#2450b8">A</text><text x="1" y="18" fill="#a02828">Z</text><path d="M13.500 2V16" stroke="#000"/><path d="M11 13H16L13.500 17Z"/></svg>
  </div>
  <div class="pgrid">
    <div class="pc">Graphique</div>
    <div class="pr sel"><span>Description</span><span></span></div>
    <div class="pc">Apparence</div>
    <div class="pr"><span>AnchorFixedTo</span><span>Relative</span></div>
    <div class="pr"><span>AbsoluteAnchor</span><b>329, 248</b></div>
    <div class="pr"><span>RelativeAnchor</span><b>0, 0</b></div>
    <div class="pr"><span>Smoothing</span><span>True</span></div>
    <div class="pc">Comportement en exploitation</div>
    <div class="pr"><span>MultiplePopupsAllowed</span><span>True</span></div>
    <div class="pr"><span>Scripts</span><b>(Collection)</b></div>
    <div class="pc">Propriétés personnalisées</div>
    <div class="pr"><span>CustomProperties</span><b>0 Propriétés</b></div>
  </div>
  <div class="pdesc"><b>Description</b><span>Détermine la description de la fenêtre ou du symbole.</span></div>
</aside>
</main>

<footer class="status"><span class="s1">Prêt</span><span class="s2"></span><span class="s3">IPG : 5,0</span><span class="s4">fr-FR</span><span class="s5">150, 165</span><span class="s6">L: 504, H: 331</span><svg class="grip" viewBox="0 0 12 12"><path d="M8 1h2v2h-2zM4 5h2v2h-2zM8 5h2v2h-2zM0 9h2v2h-2zM4 9h2v2h-2zM8 9h2v2h-2z" fill="#bbb"/></svg></footer>

<div class="taskbar">
  <span class="tk a"><svg viewBox="0 0 36 36"><path d="M2.500 2.500H17.500V31.500H2.500Z" fill="#2090e0" stroke="#fff"/><path d="M2.500 10.500H17.500" stroke="#fff"/><path d="M7.500 20.500H33.500V33.500H7.500Z" fill="#6f95aa" stroke="#fff"/><path d="M16 20V17.500H24V20M10 24.500H31" stroke="#fff" fill="none"/><path d="M10 22.500V26.500M31 22.500V26.500" stroke="#fff"/></svg></span>
  <span class="tk b"><svg viewBox="0 0 36 36"><defs><linearGradient id="ps" x2="0" y2="1"><stop stop-color="#78b8e0"/><stop offset="1" stop-color="#145a9c"/></linearGradient></defs><path d="M10 7H31L25.500 28H4.500Z" fill="url(#ps)" stroke="#b8dcf4" stroke-width="1.500"/><path d="M12 11L20 17L11 24M18 24H24" stroke="#fff" stroke-width="2.500" fill="none"/></svg></span>
  <span class="tk a"><svg viewBox="0 0 36 36"><path d="M4 6H15L17 8H26L28 6H33V32H3Z" fill="#f6e08c" stroke="#c8a850"/><path d="M6 5H14V8H6Z" fill="#fff"/><path d="M6 5H9V8H6Z" fill="#2a2"/><path d="M14 7H17V9H14Z" fill="#d33"/><path d="M23 9H26V11H23Z" fill="#38c"/><path d="M4 14H32V28H4Z" fill="#fbeeb0"/><path d="M9 33V23Q9 21 12 21H27Q30 21 30 23V33H26V26H13V33Z" fill="#9ad2ee" stroke="#5898c0"/><path d="M11 13V27M5 20H17" stroke="#fff"/></svg></span>
  <span class="tk b"><svg viewBox="0 0 36 36"><defs><radialGradient id="ball" cx=".4" cy=".3"><stop stop-color="#b8f0ff"/><stop offset=".6" stop-color="#2890f0"/><stop offset="1" stop-color="#0a4cc0"/></radialGradient></defs><circle cx="18" cy="17" r="13" fill="url(#ball)"/><path d="M3 32Q4 10 32 1Q13 13 9 30Z" fill="#b8107c"/><path d="M11 32Q14 15 34 7Q22 15 18 31Z" fill="#f87818" stroke="#fff" stroke-width=".5"/></svg></span>
  <span class="tk a"><svg viewBox="0 0 36 36"><rect x="8" y="4" width="22" height="29" rx="6" fill="#d82028" stroke="#111" stroke-width="2"/><rect x="10" y="6" width="18" height="25" rx="4" fill="none" stroke="#f6c8c0"/><path d="M14 8V28M17 6V20M20 7V24M24 7V28M18 18L16 30M21 15L22 29" stroke="#f4b8b0" stroke-width=".8"/></svg></span>
  <span class="tk act"><svg viewBox="0 0 36 36"><circle cx="18" cy="17.500" r="9" fill="url(#ball)"/><path d="M10 14H26M9.500 18H26.500M11 22H25M15 9L14 26M20 9L22 26" stroke="#c8e8fc" stroke-width=".7"/><path d="M3 4Q11 5 20 15Q27 24 33 33Q24 30 15 21Q6 13 3 4Z" fill="#b01878"/><path d="M32 3Q24 5 16 14Q8 23 3 33Q12 30 21 21Q30 13 32 3Z" fill="#f88820"/><path d="M16.500 13.500Q22 18 24 24" stroke="#5ab4f4" stroke-width="4" fill="none" opacity=".35"/></svg></span><i class="actend"></i>
  <div class="tray">
    <svg class="up" viewBox="0 0 8 5"><path d="M0 5L4 1L8 5Z"/></svg>
    <svg viewBox="0 0 18 18"><path d="M2 1V17" stroke="#444" stroke-width="2"/><path d="M3 3H9Q11 6 15 4V11H3Z" fill="#fff" stroke="#456"/><circle cx="12" cy="12" r="4.500" fill="#e03030" stroke="#fff" stroke-width=".6"/><path d="M10 10L14 14M14 10L10 14" stroke="#fff" stroke-width="1.500"/></svg>
    <svg viewBox="0 0 18 18"><path d="M5.500 3.500H16.500V12.500H5.500Z" fill="#8cd4f0" stroke="#345"/><path d="M1.500 2.500H5.500V7.500H1.500Z" fill="#fff" stroke="#345"/><path d="M3.500 8V14.500H8" fill="none" stroke="#345"/><path d="M12 7L17 17H7Z" fill="#f8c818" stroke="#d09800" stroke-width=".6"/><path d="M12 10V13.500M12 14.500V16" stroke="#000" stroke-width="1.400"/></svg>
    <svg viewBox="0 0 18 18"><path d="M2.500 6.500H5L9 2.500V15.500L5 12H2.500Z" fill="#fff" stroke="#345"/><circle cx="12" cy="12" r="4.500" fill="#e03030" stroke="#fff" stroke-width=".6"/><path d="M10 10L14 14M14 10L10 14" stroke="#fff" stroke-width="1.500"/></svg>
    <div class="clock"><span>07:54</span><span>31/07/2017</span></div>
  </div>
</div>
</div>
</body>
</html>
```

FILE: styles.css
```css
* { box-sizing: border-box; }
body { margin: 0; font: 11px/16px "DejaVu Sans Condensed", "Noto Sans", sans-serif; color: #000; overflow: hidden; }
svg { display: block; flex: none; }
h1, h2 { margin: 0; font-size: inherit; }
.window { width: 1920px; height: 1200px; display: flex; flex-direction: column; background: linear-gradient(90deg, #c6c6c6, #e2e2e2); }

/* title bar and menu */
.titlebar { height: 23px; flex: none; background: #66caea; border-bottom: 1px solid #74aecb; display: grid; grid-template-columns: 1fr auto 1fr; }
.appicon { width: 18px; height: 16px; margin: 4px 0 0 1px; }
.titlebar h1 { font: 14.3px/23px "Noto Sans", sans-serif; letter-spacing: -0.15px; color: #111; }
.winbtns { justify-self: end; display: flex; height: 20px; margin-right: 2px; border: solid #25627c; border-width: 0 1px 1px; }
.wb { border-left: 1px solid #25627c; }
.wb:first-child { border-left: 0; }
.wb svg { height: 19px; }
.min svg { width: 27px; }
.max svg { width: 25px; }
.close svg { width: 45px; }
.close { background: #c55b52; }
.menu { height: 21px; flex: none; background: #f0f0f0; border-bottom: 1px solid #d8d8d8; display: flex; gap: 14.300px; padding: 3px 7px 0; letter-spacing: 0.250px; }

/* toolbars */
.toolbars { height: 83px; flex: none; display: flex; flex-direction: column; align-items: flex-start; gap: 1px; padding-left: 6px; }
.tb { height: 26px; display: flex; flex: none; background: linear-gradient(#e8e8e8, #c8c8c8 60%, #b0b0b0); border-bottom: 1px solid #444; }
.tb > * { flex: none; }
.tb1 { width: 971px; }
.tb2 { width: 833px; }
.tb3 { width: 832px; }
.i { width: 24px; height: 24px; margin-top: -1px; fill: none; stroke: #9c9c9c; }
.sp { width: 39px; }
.sep { width: 2px; height: 22px; margin: 3px 1px 0; background: linear-gradient(90deg, #6a8ccc 50%, #fff 50%); }
.savelabel { width: 109px; padding: 5px 0 0 2px; color: #747474; white-space: nowrap; letter-spacing: -0.080px; }
.i text { stroke: none; font-family: "Liberation Serif", serif; font-weight: bold; }
.q { fill: #fff; font-size: 12px; text-anchor: middle; }
.a1 { fill: #2c5cb8; font-size: 15px; font-style: italic; }
.a2 { fill: #5c2c98; }
.ga { fill: #a0a0a0; font-size: 16px; }
.gb { fill: #a0a0a0; font-size: 13px; }
.na { fill: #1c3f90; font-size: 16px; }
.c { fill: #0b3aa4; stroke: none; }
.star { fill: #1818c8; stroke: none; }
.mag circle { fill: #dbe8f8; stroke: #7888a0; }
.mag .k { stroke: #2c4c90; stroke-width: 1.500; }
.mag .h { stroke: #c09830; stroke-width: 2.500; }
.wf, .w { fill: #eee; }
.combo { display: flex; justify-content: space-between; align-items: center; background: #fff; border: 1px solid #6e6e6e; height: 21px; padding: 0 4px; flex: none; }
.chev { width: 6px; height: 6px; border: solid #555; border-width: 0 2px 2px 0; transform: translateY(-2px) rotate(45deg); }
.zoomwrap { background: #d6d6d6; width: 78px; height: 26px; padding: 2px 7px 0 13px; }
.zoom { width: 58px; padding-left: 2px; }
.font { width: 128px; margin: 2px 3px 0 2px; }
.size { width: 60px; margin: 2px 1px 0 0; padding-left: 2px; }
.tb2 .aa { background: #d9dadd; height: 25px; margin-top: 0; }
.fmt { width: 24px; text-align: center; font: bold 12px/22px "DejaVu Serif", serif; }
.it { font-style: italic; }
.un { text-decoration: underline; }
.sans { width: 128px; margin-top: 2px; background: #dcdcdc; padding: 0 0 0 5px; }
.drop { width: 17px; height: 19px; border-left: 1px solid #6e6e6e; display: grid; place-items: center; }
.drop::after { content: ""; border: 3.500px solid transparent; border-top-color: #000; border-bottom: 0; }

/* work area */
.work { flex: none; height: 1011px; display: flex; }
.hd { height: 25px; font-size: 11px; line-height: 26px; padding-left: 7px; background: linear-gradient(#e8e8e8, #b8b8b8); border-bottom: 1px solid #555; flex: none; letter-spacing: -0.15px; }
.left { width: 217px; flex: none; height: 1005px; display: flex; flex-direction: column; background: #e6e6e6; }
.tools { display: grid; grid-template-columns: repeat(8, 24px); grid-auto-rows: 24px; gap: 2px 3px; padding: 3px 2px 5px; height: 136px; flex: none; }
.tools svg { width: 24px; height: 24px; border: 1px solid #c6c6c6; border-radius: 3px; fill: none; stroke: #1c3870; background: #eaeaea; }
.tools .on { background: #c4c4c4; border-color: #888 #fff #fff #888; }
.f { fill: #fff; }
.t { fill: #142c68; stroke: none; font: bold 15px "Liberation Serif", serif; text-anchor: middle; }
.tree { flex: 1; margin-top: 2px; background: #fff; border: 1px solid #7c8088; padding-top: 2px; position: relative; }
.row { display: flex; align-items: center; height: 16px; gap: 6px; position: relative; }
.row svg { width: 12px; height: 12px; fill: none; stroke: #3c5a9c; overflow: visible; }
.row .d { fill: #3c5a9c; stroke: none; }
.tt { fill: #284a90; stroke: none; font: italic bold 10px "Liberation Serif", serif; }
.l0 { padding-left: 25px; }
.l1 { padding-left: 44px; }
.l2 { padding-left: 63px; }
.row::before { content: ""; width: 10px; height: 1px; margin: 0 -4px 0 -12px; background: repeating-linear-gradient(90deg, #777 0 1px, transparent 1px 2px); }
.ex { position: absolute; margin-left: -17px; width: 9px; height: 9px; border: 1px solid #999; background: linear-gradient(#333, #333) center/5px 1px no-repeat #eee; }
.dots { position: absolute; width: 1px; background: repeating-linear-gradient(#777 0 1px, transparent 1px 2px); }
.v1 { left: 31px; top: 18px; height: 137px; }
.v2 { left: 50px; top: 98px; height: 41px; }

/* drawing surface */
.frame { width: 1407px; flex: none; height: 1005px; padding: 7px 7px 7px 4px; border-left: 3px solid #fff; background: linear-gradient(#555, #555) 0 0/100% 1px no-repeat, linear-gradient(#4a4a4a, #4a4a4a) 0 100%/100% 1px no-repeat, #8b8b8b; }
.page { position: relative; height: 991px; border: 1px solid #111; background: #fff; overflow: hidden; box-shadow: 2px 2px 0 #5a5a5a; }
.popup { position: absolute; left: 77px; top: 83px; width: 505px; height: 332px; background: #fff; border: 1px solid #000; font-family: "Liberation Sans", sans-serif; }
.popup > * { position: absolute; white-space: nowrap; }
.sign { left: 23px; top: 83px; width: 214px; height: 184px; }
.bang { left: 114px; top: 137px; width: 32px; text-align: center; font-weight: bold; font-size: 100px; line-height: 110px; }
.ptitle { left: 135px; top: 23px; font-size: 37.500px; line-height: 44px; font-weight: bold; letter-spacing: -0.150px; color: red; text-decoration: underline; text-decoration-thickness: 4px; text-underline-offset: 3px; text-decoration-skip-ink: none; }
.t1, .t2 { font-size: 21px; line-height: 26px; letter-spacing: 0.100px; }
.t1 { left: 285px; top: 117px; }
.t2 { left: 277px; top: 143px; }
.ok { left: 307px; top: 214px; width: 91px; height: 39px; border: 1px solid #e8e8e8; border-right: 2px solid #666; border-bottom: 2px solid #666; background: #d4d4d4; text-align: center; font-size: 16px; line-height: 38px; color: #222; }

/* languages and properties */
.right { flex: 1; min-width: 0; height: 1005px; border-left: 3px solid #fff; display: flex; flex-direction: column; }
.lang { height: 27px; padding-left: 11px; line-height: 28px; }
.langrow { display: flex; gap: 7px; padding: 5px 0 0 4px; height: 33px; flex: none; }
.lg { width: 255px; font-weight: bold; padding-left: 3px; letter-spacing: 0.080px; }
.more { width: 20px; height: 19px; border: 1px solid #6e6e6e; text-align: center; line-height: 17px; letter-spacing: 1px; }
.props { height: 27px; margin-left: 4px; line-height: 28px; padding-left: 9px; letter-spacing: 0.150px; }
.ptools { height: 28px; flex: none; margin-left: 4px; background: #e8e8e8; border-bottom: 2px solid #fff; padding: 4px 2px; display: flex; gap: 2px; }
.cat { width: 23px; height: 22px; border: 1px solid #2a9ce0; background: #dbeafc; }
.az { width: 18px; height: 20px; }
.az text { font: bold 10px "Liberation Serif", serif; }
.pgrid { flex: 1; margin-left: 4px; border: 1px solid #999; background: #ebebeb; padding-top: 1px; }
.pc { height: 16px; background: #c3c3c3; padding-left: 23px; font-weight: bold; border-top: 1px solid #eee; line-height: 15px; position: relative; display: flex; align-items: center; }
.pc:first-child { border-top-color: #c3c3c3; }
.pc::before { content: ""; position: absolute; left: 8px; top: 4px; width: 6px; height: 6px; background: linear-gradient(135deg, transparent 50%, #888 50%); border: solid #555; border-width: 0 1px 1px 0; }
.pr { height: 16px; display: grid; grid-template-columns: 153px 1fr; border-left: 21px solid #c3c3c3; line-height: 18px; }
.pr > * { padding-left: 2px; border-bottom: 1px solid #c8c8c8; white-space: nowrap; height: 16px; letter-spacing: -0.040px; }
.pr > :first-child { border-right: 1px solid #c8c8c8; }
.sel > :first-child { background: #c3c3c3; }
.pdesc { height: 46px; flex: none; margin: 3px 0 0 4px; border: 1px solid #999; background: #e8e8e8; padding: 2px 3px; display: flex; flex-direction: column; }
.pdesc span { line-height: 14px; white-space: nowrap; letter-spacing: -0.200px; }

/* status bar */
.status { height: 22px; flex: none; background: #fff; border-top: 1px solid #a0a0a0; border-bottom: 1px solid #999; display: flex; padding: 2px 2px 0 1px; gap: 4px; }
.status span { height: 18px; border: 1px solid #999; flex: none; line-height: 17px; text-align: center; }
.status .s1 { width: 1444px; text-align: left; }
.s2 { width: 18px; }
.s3 { width: 56px; }
.s4 { width: 46px; }
.status .s5 { width: 71px; text-align: left; letter-spacing: -0.250px; }
.status .s6 { width: 246px; text-align: left; letter-spacing: -0.150px; }
.grip { width: 12px; height: 12px; margin: 6px 0 0 auto; }

/* taskbar */
.taskbar { height: 40px; flex: none; background: #66caea; border: solid #3c7288; border-width: 1px 0; display: flex; padding-left: 16px; position: relative; }
.tk { display: grid; place-items: center; height: 38px; flex: none; }
.tk svg { width: 36px; height: 36px; }
.tk.a { width: 60px; background: #7ed3ee; border: solid #35708a; border-width: 0 1px; }
.tk.b { width: 64px; }
.tk.act { width: 56px; margin-left: 2px; background: #a4def2; border: solid #35708a; border-width: 0 1px; }
.actend { width: 5px; background: #8fd6ee; border-right: 1px solid #35708a; }
.tray { margin-left: auto; display: flex; align-items: center; gap: 6px; padding-right: 26px; }
.tray svg { width: 18px; height: 18px; }
.tray .up { width: 8px; height: 5px; margin-right: 6px; }
.clock { display: flex; flex-direction: column; align-items: center; font: 11.300px/17px "Noto Sans", sans-serif; letter-spacing: -0.200px; margin-left: 10px; color: #123; }
```
